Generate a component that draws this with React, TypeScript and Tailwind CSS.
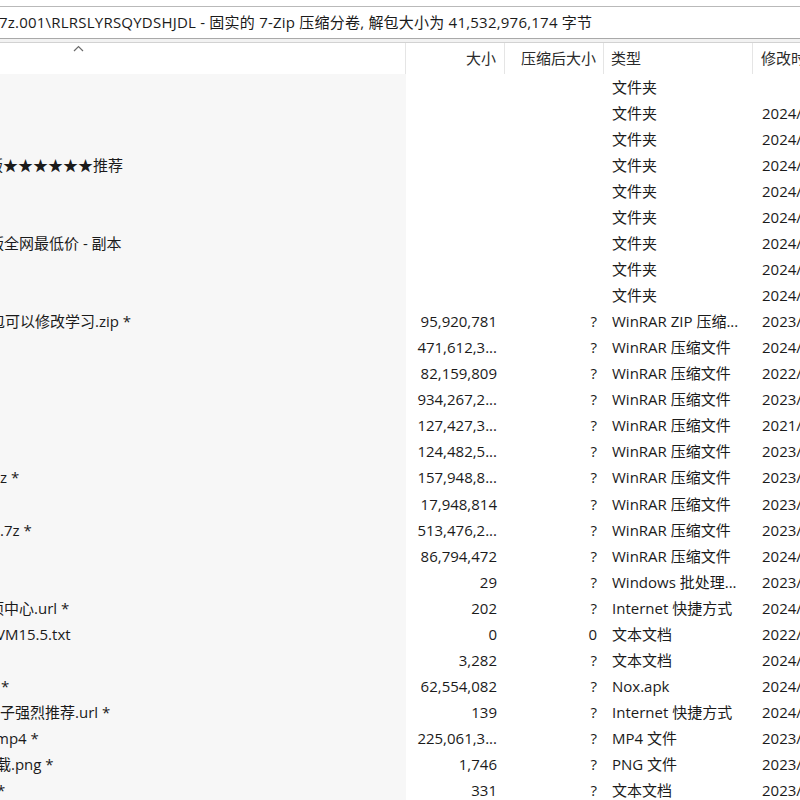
import React from 'react';

type Row = {
  name?: string;
  offset?: string;
  size?: string;
  packed?: string;
  type: string;
  date?: string;
};

const rows: Row[] = [
  { type: '文件夹' },
  { type: '文件夹', date: '2024/' },
  { type: '文件夹', date: '2024/' },
  { name: '版★★★★★★推荐', offset: '-ml-[12px]', type: '文件夹', date: '2024/' },
  { type: '文件夹', date: '2024/' },
  { type: '文件夹', date: '2024/' },
  { name: '版全网最低价 - 副本', offset: '-ml-[11px]', type: '文件夹', date: '2024/' },
  { type: '文件夹', date: '2024/' },
  { type: '文件夹', date: '2024/' },
  { name: '包可以修改学习.zip *', offset: '-ml-[10px]', size: '95,920,781', packed: '?', type: 'WinRAR ZIP 压缩...', date: '2023/' },
  { size: '471,612,3...', packed: '?', type: 'WinRAR 压缩文件', date: '2024/' },
  { size: '82,159,809', packed: '?', type: 'WinRAR 压缩文件', date: '2022/' },
  { size: '934,267,2...', packed: '?', type: 'WinRAR 压缩文件', date: '2023/' },
  { size: '127,427,3...', packed: '?', type: 'WinRAR 压缩文件', date: '2021/' },
  { size: '124,482,5...', packed: '?', type: 'WinRAR 压缩文件', date: '2023/' },
  { name: 'z *', offset: 'ml-0', size: '157,948,8...', packed: '?', type: 'WinRAR 压缩文件', date: '2023/' },
  { size: '17,948,814', packed: '?', type: 'WinRAR 压缩文件', date: '2023/' },
  { name: '.7z *', offset: 'ml-0', size: '513,476,2...', packed: '?', type: 'WinRAR 压缩文件', date: '2023/' },
  { size: '86,794,472', packed: '?', type: 'WinRAR 压缩文件', date: '2024/' },
  { size: '29', packed: '?', type: 'Windows 批处理...', date: '2023/' },
  { name: '项中心.url *', offset: '-ml-[11px]', size: '202', packed: '?', type: 'Internet 快捷方式', date: '2024/' },
  { name: 'VM15.5.txt', offset: '-ml-[4px]', size: '0', packed: '0', type: '文本文档', date: '2022/' },
  { size: '3,282', packed: '?', type: '文本文档', date: '2024/' },
  { name: ' *', offset: 'ml-[1px]', size: '62,554,082', packed: '?', type: 'Nox.apk', date: '2024/' },
  { name: '子强烈推荐.url *', offset: 'ml-0', size: '139', packed: '?', type: 'Internet 快捷方式', date: '2024/' },
  { name: 'mp4 *', offset: '-ml-[5px]', size: '225,061,3...', packed: '?', type: 'MP4 文件', date: '2023/' },
  { name: '载.png *', offset: '-ml-[4px]', size: '1,746', packed: '?', type: 'PNG 文件', date: '2023/' },
  { name: '*', offset: '-ml-[3px]', size: '331', packed: '?', type: '文本文档', date: '2023/' },
];

const font = 'font-["Open_Sans","Noto_Sans_CJK_SC",sans-serif]';

export default function App() {
  return (
    <div className={`w-[800px] h-[800px] overflow-hidden bg-white text-[15px] leading-none text-[#1b1b1b] ${font}`}>
      {/* Address bar */}
      <div className="h-[6px] bg-white" />
      <div className="h-px bg-[#b9b9b9]" />
      <div className="h-[31px] flex items-center whitespace-nowrap">
        <span className="-ml-[1px] tracking-[0.22px]">
          7z.001\RLRSLYRSQYDSHJDL - 固实的 7-Zip 压缩分卷, 解包大小为 41,532,976,174 字节
        </span>
      </div>
      <div className="h-px bg-[#a9a9a9]" />
      <div className="h-[3px] bg-[#f2f2f2]" />
      <div className="h-px bg-[#d2d2d2]" />

      {/* Column headers */}
      <div className="grid grid-cols-[406px_99px_99px_149px_1fr] h-[31px] text-[#2b2b2b]">
        <div className="relative border-r border-[#e5e5e5]">
          <svg className="absolute left-[73px] top-[2px]" width="11" height="7" viewBox="0 0 11 7">
            <polyline points="1,6 5.5,1.5 10,6" fill="none" stroke="#6b6b6b" strokeWidth="1.2" />
          </svg>
        </div>
        <div className="flex items-center justify-end pr-[8px] border-r border-[#e5e5e5]">大小</div>
        <div className="flex items-center justify-end pr-[7px] border-r border-[#e5e5e5]">压缩后大小</div>
        <div className="flex items-center pl-[7px] border-r border-[#e5e5e5]">类型</div>
        <div className="flex items-center pl-[8px] whitespace-nowrap">修改时间</div>
      </div>

      {/* File rows */}
      <div className="grid grid-cols-[406px_99px_99px_149px_1fr] auto-rows-[26.07px]">
        {rows.map((r, i) => (
          <React.Fragment key={i}>
            <div className="bg-[#f7f7f7] flex items-center overflow-hidden whitespace-nowrap">
              {r.name && <span className={r.offset}>{r.name}</span>}
            </div>
            <div className="flex items-center justify-end pr-[8px] whitespace-nowrap">{r.size}</div>
            <div className="flex items-center justify-end pr-[7px]">{r.packed}</div>
            <div className="flex items-center pl-[8px] whitespace-nowrap overflow-hidden">{r.type}</div>
            <div className="flex items-center pl-[9px] whitespace-nowrap overflow-hidden">{r.date}</div>
          </React.Fragment>
        ))}
      </div>
    </div>
  );
}
